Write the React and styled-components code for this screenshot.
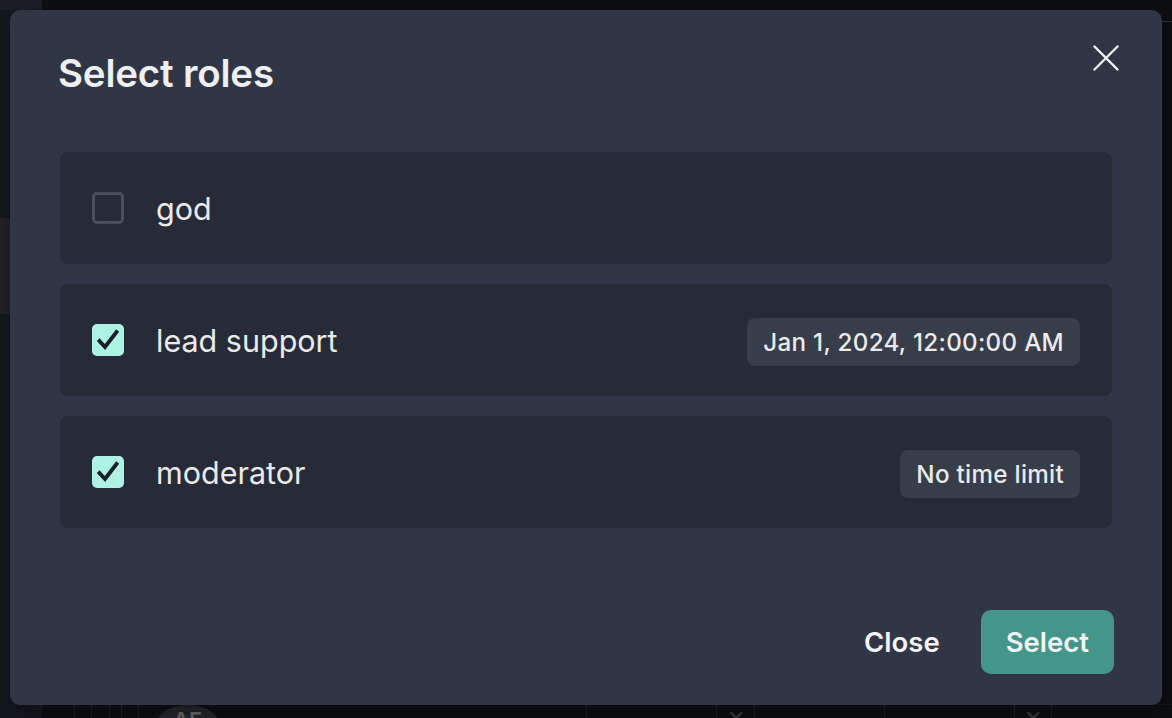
import React from 'react';
import styled, { createGlobalStyle } from 'styled-components';

const GlobalStyle = createGlobalStyle`
  html, body {
    margin: 0;
    padding: 0;
    height: 100%;
    background: #0c0e12;
    font-family: Inter, "Noto Sans", sans-serif;
    overflow: hidden;
  }
  * {
    box-sizing: border-box;
  }
`;

const Page = styled.div`
  position: relative;
  width: 1172px;
  height: 718px;
  display: flex;
  background: #0c0e12;
`;

const Sidebar = styled.div`
  width: 42px;
  display: flex;
  flex-direction: column;
  background: #141820;
  border-top: 10px solid #1b1e26;
`;

const SideItem = styled.div`
  margin-top: 208px;
  height: 96px;
  background: #222428;
`;

const Main = styled.div`
  flex: 1;
  display: flex;
  flex-direction: column;
`;

const TopBar = styled.div`
  height: 22px;
  border-bottom: 1px solid #2a2d33;
`;

const Spacer = styled.div`
  flex: 1;
`;

const TableRow = styled.div`
  height: 14px;
  display: flex;
  align-items: flex-start;
  border-top: 1px solid #16181d;
`;

const Cell = styled.div`
  width: ${(p) => p.$w}px;
  flex: none;
  height: 100%;
  border-right: ${(p) => (p.$line ? '1px solid #1c1f25' : 'none')};
  display: flex;
  justify-content: center;
  color: #3a3d44;
  font-size: 22px;
  line-height: 22px;
  padding-top: 2px;
  overflow: hidden;
`;

const Avatar = styled.div`
  width: 63px;
  height: 40px;
  flex: none;
  border-radius: 50%;
  background: #25282d;
  color: #6b6e74;
  font-size: 22px;
  font-weight: 600;
  text-align: center;
  padding-top: 2px;
  margin-left: 17px;
`;

const Overlay = styled.div`
  position: absolute;
  inset: 0;
  padding: 10px 10px 13px 10px;
  display: flex;
`;

const Modal = styled.section`
  position: relative;
  width: 1152px;
  height: 695px;
  background: #303646;
  border-radius: 10px;
  display: flex;
  flex-direction: column;
  box-shadow: 0 10px 30px rgba(0, 0, 0, 0.35);
`;

const Header = styled.h2`
  margin: 0;
  padding: 41px 50px 0 48px;
  font-size: 38.5px;
  line-height: 44px;
  font-weight: 600;
  color: #eeeff1;
  letter-spacing: -0.2px;
`;

const CloseX = styled.button`
  position: absolute;
  top: 35px;
  right: 43px;
  width: 26px;
  height: 26px;
  padding: 0;
  border: none;
  background: transparent;
  color: #f0f1f3;
  display: flex;
  align-items: center;
  justify-content: center;
  cursor: pointer;
`;

const Body = styled.div`
  padding: 57px 50px 0 50px;
  display: flex;
  flex-direction: column;
  gap: 20px;
`;

const Row = styled.label`
  height: 112px;
  background: #272b38;
  border-radius: 8px;
  display: flex;
  align-items: center;
  padding: 0 32px;
  gap: 33px;
  cursor: pointer;
`;

const Box = styled.span`
  width: 32px;
  height: 32px;
  flex: none;
  border-radius: 5px;
  border: 3px solid ${(p) => (p.$checked ? '#aef2e3' : '#4b505c')};
  background: ${(p) => (p.$checked ? '#aef2e3' : 'transparent')};
  display: flex;
  align-items: center;
  justify-content: center;
`;

const Label = styled.span`
  flex: 1;
  font-size: 30.5px;
  color: #e9eaec;
  font-weight: 400;
  margin-left: -1px;
`;

const Badge = styled.span`
  height: 48px;
  padding: 0 16px;
  border-radius: 8px;
  background: #383d4a;
  color: #e9eaec;
  font-size: 24.2px;
  font-weight: 500;
  display: flex;
  align-items: center;
  letter-spacing: 0.3px;
  margin-top: 4px;
`;

const Footer = styled.div`
  margin-top: auto;
  padding: 0 48px 31px 50px;
  display: flex;
  justify-content: flex-end;
  gap: 16px;
`;

const Button = styled.button`
  height: 64px;
  padding: 0 25px;
  border: none;
  border-radius: 10px;
  font-family: inherit;
  font-size: 27.5px;
  font-weight: 600;
  color: #f3f4f5;
  background: ${(p) => (p.$primary ? '#44968a' : 'transparent')};
  cursor: pointer;
`;

const roles = [
  { name: 'god', checked: false },
  { name: 'lead support', checked: true, limit: 'Jan 1, 2024, 12:00:00 AM' },
  { name: 'moderator', checked: true, limit: 'No time limit' },
];

const Check = () => (
  <svg width="24" height="24" viewBox="0 0 24 24" fill="none">
    <path d="M3.5 13l5.5 6L20.5 4" stroke="#1b1f2a" strokeWidth="3.8" strokeLinecap="square" strokeLinejoin="miter" />
  </svg>
);

const leftCells = [33, 17, 18, 12, 17];
const rightCells = [
  { w: 368 },
  { w: 130 },
  { w: 38, x: true },
  { w: 130 },
  { w: 130 },
  { w: 37, x: true },
];

export default function App() {
  return (
    <>
      <GlobalStyle />
      <Page>
        <Sidebar>
          <SideItem />
        </Sidebar>
        <Main>
          <TopBar />
          <Spacer />
          <TableRow>
            {leftCells.map((w, i) => (
              <Cell key={i} $w={w} $line />
            ))}
            <Avatar>AF</Avatar>
            {rightCells.map((c, i) => (
              <Cell key={i} $w={c.w} $line>
                {c.x ? '✕' : null}
              </Cell>
            ))}
          </TableRow>
        </Main>

        <Overlay>
          <Modal role="dialog" aria-label="Select roles">
            <Header>Select roles</Header>
            <CloseX aria-label="Close">
              <svg width="26" height="26" viewBox="0 0 26 26" fill="none">
                <path d="M1.5 1.5l23 23M24.5 1.5l-23 23" stroke="currentColor" strokeWidth="2.4" strokeLinecap="round" />
              </svg>
            </CloseX>
            <Body>
              {roles.map((r) => (
                <Row key={r.name}>
                  <Box $checked={r.checked}>{r.checked && <Check />}</Box>
                  <Label>{r.name}</Label>
                  {r.limit && <Badge>{r.limit}</Badge>}
                </Row>
              ))}
            </Body>
            <Footer>
              <Button>Close</Button>
              <Button $primary>Select</Button>
            </Footer>
          </Modal>
        </Overlay>
      </Page>
    </>
  );
}
